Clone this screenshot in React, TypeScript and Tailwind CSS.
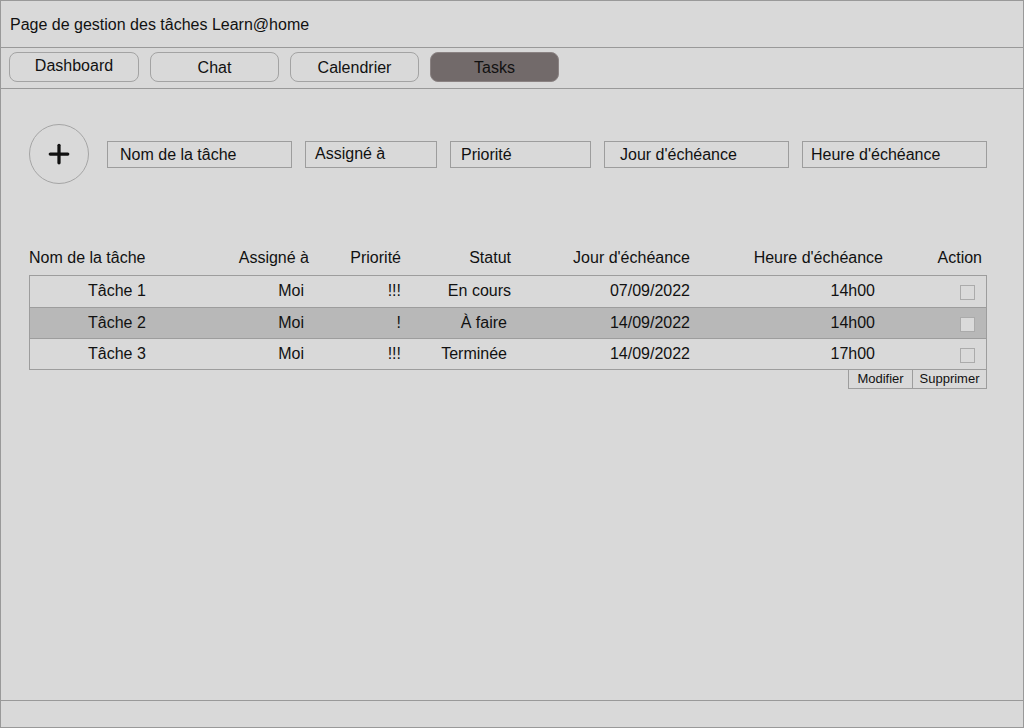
import { Plus } from "lucide-react";

const FONT = "font-['Liberation_Sans','Arial',sans-serif]";

const tabs = [
  { label: "Dashboard", active: false, shift: "-translate-y-[1px]", width: "w-[130px]" },
  { label: "Chat", active: false, shift: "translate-y-[1px]", width: "w-[129px]" },
  { label: "Calendrier", active: false, shift: "translate-y-[1px]", width: "w-[129px]" },
  { label: "Tasks", active: true, shift: "translate-y-[1px]", width: "w-[129px]" },
];

const fields = [
  { label: "Nom de la tâche", width: "w-[185px]", pad: "pl-[12px] translate-y-[1px]" },
  { label: "Assigné à", width: "w-[132px]", pad: "pl-[9px]" },
  { label: "Priorité", width: "w-[141px]", pad: "pl-[10px] translate-y-[1px]" },
  { label: "Jour d'échéance", width: "w-[185px]", pad: "pl-[15px] translate-y-[1px]" },
  { label: "Heure d'échéance", width: "w-[185px]", pad: "pl-[8px] translate-y-[1px]" },
];

type Task = {
  name: string;
  who: string;
  priority: string;
  status: string;
  statusPad: string;
  day: string;
  hour: string;
  row: string;
};

const tasks: Task[] = [
  { name: "Tâche 1", who: "Moi", priority: "!!!", status: "En cours", statusPad: "pr-0", day: "07/09/2022", hour: "14h00", row: "h-[32px] border-b pb-[1px]" },
  { name: "Tâche 2", who: "Moi", priority: "!", status: "À faire", statusPad: "pr-[4px]", day: "14/09/2022", hour: "14h00", row: "h-[31px] border-b bg-[#b8b8b8]" },
  { name: "Tâche 3", who: "Moi", priority: "!!!", status: "Terminée", statusPad: "pr-[4px]", day: "14/09/2022", hour: "17h00", row: "h-[30px]" },
];

export default function App() {
  return (
    <div className={`flex h-[728px] w-[1024px] flex-col border border-[#999] bg-[#d9d9d9] text-[16px] text-[#111] ${FONT}`}>
      <header className="flex h-[47px] shrink-0 items-center border-b border-[#999] pl-[9px] pt-[2px]">
        <h1 className="text-[16px] font-normal">Page de gestion des tâches Learn@home</h1>
      </header>

      <nav className="flex h-[41px] shrink-0 items-start gap-[11px] border-b border-[#999] pl-[8px] pt-[4px]">
        {tabs.map((tab) => (
          <button
            key={tab.label}
            className={`flex h-[30px] items-center justify-center rounded-[8px] border text-[16px] ${tab.width} ${
              tab.active ? "border-[#8a8282] bg-[#726a6a]" : "border-[#a3a3a3] bg-[#d9d9d9]"
            }`}
          >
            <span className={tab.shift}>{tab.label}</span>
          </button>
        ))}
      </nav>

      <main className="flex-1 pl-[28px] pt-[35px]">
        <div className="flex items-center">
          <button className="flex h-[60px] w-[60px] items-center justify-center rounded-full border border-[#a5a5a5]">
            <Plus size={30} strokeWidth={2.6} className="text-[#111]" />
          </button>
          <div className="ml-[18px] flex gap-[13px]">
            {fields.map((f) => (
              <div key={f.label} className={`flex h-[27px] items-center border border-[#9d9d9d] ${f.width}`}>
                <span className={f.pad}>{f.label}</span>
              </div>
            ))}
          </div>
        </div>

        <div className="mt-[62px] flex h-[24px] w-[954px] items-center">
          <div className="w-[170px]">Nom de la tâche</div>
          <div className="w-[110px] text-right">Assigné à</div>
          <div className="w-[92px] text-right">Priorité</div>
          <div className="w-[110px] text-right">Statut</div>
          <div className="w-[179px] text-right">Jour d'échéance</div>
          <div className="w-[193px] text-right">Heure d'échéance</div>
          <div className="w-[99px] text-right">Action</div>
        </div>

        <div className="mt-[5px] w-[958px] border border-[#9d9d9d]">
          {tasks.map((t) => (
            <div key={t.name} className={`flex items-center border-[#9d9d9d] ${t.row}`}>
              <div className="w-[169px] pl-[58px]">{t.name}</div>
              <div className="w-[105px] text-right">{t.who}</div>
              <div className="w-[97px] text-right">{t.priority}</div>
              <div className={`w-[110px] text-right ${t.statusPad}`}>{t.status}</div>
              <div className="w-[179px] text-right">{t.day}</div>
              <div className="w-[185px] text-right">{t.hour}</div>
              <div className="flex-1 pl-[85px]">
                <div className="h-[15px] w-[15px] translate-y-[1px] border border-[#ababab] bg-[#dadada]" />
              </div>
            </div>
          ))}
        </div>

        <div className="flex w-[958px] justify-end">
          <div className="flex h-[19px] border-x border-b border-[#9d9d9d] text-[13px]">
            <button className="w-[64px] border-r border-[#9d9d9d] text-center leading-[18px]">Modifier</button>
            <button className="w-[73px] text-center leading-[18px]">Supprimer</button>
          </div>
        </div>
      </main>

      <footer className="h-[27px] shrink-0 border-t border-[#999]" />
    </div>
  );
}
